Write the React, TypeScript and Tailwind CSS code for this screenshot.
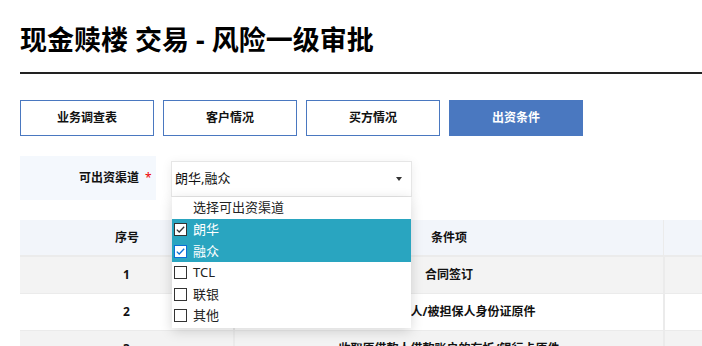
import React from 'react';

const font = { fontFamily: '"Noto Sans", "Noto Sans CJK SC", sans-serif' };

const tabs = [
  { id: 'survey', name: '业务调查表' },
  { id: 'customer', name: '客户情况' },
  { id: 'buyer', name: '买方情况' },
  { id: 'funding', name: '出资条件' },
];

const options = [
  { id: 'lh', name: '朗华', checked: true, focus: false },
  { id: 'rz', name: '融众', checked: true, focus: true },
  { id: 'tcl', name: 'TCL', checked: false, focus: false },
  { id: 'ly', name: '联银', checked: false, focus: false },
  { id: 'qt', name: '其他', checked: false, focus: false },
];

const rows = [
  { no: '1', item: '合同签订', bg: 'bg-[#f3f3f3]' },
  { no: '2', item: '收取借款人/被担保人身份证原件', bg: 'bg-white' },
  { no: '3', item: '收取原借款人借款账户的存折/银行卡原件', bg: 'bg-[#f3f3f3]' },
];

const Checkbox: React.FC<{ checked: boolean; focus: boolean }> = ({ checked, focus }) => (
  <svg width="13" height="13" viewBox="0 0 13 13" className="shrink-0">
    <rect x="0.5" y="0.5" width="12" height="12" fill="#fff" stroke={focus ? '#0a6fd6' : '#333'} />
    {checked && (
      <path d="M2.8 6.6 L5.2 9 L10.2 3.8" fill="none" stroke={focus ? '#0a6fd6' : '#333'} strokeWidth="1.3" />
    )}
  </svg>
);

export default function App() {
  const activeTab = 'funding';

  return (
    <div className="w-[702px] h-[346px] overflow-hidden bg-white" style={font}>
      <div className="pl-[20px] pt-[22px] w-[900px]">
        <h1 className="text-[27px] leading-[36px] font-bold text-black">现金赎楼 交易 - 风险一级审批</h1>
        <div className="mt-[14px] h-[2px] bg-[#222]" />

        <div className="mt-[26px] flex gap-[9px]">
          {tabs.map(tab => (
            <div
              key={tab.id}
              className={
                activeTab === tab.id
                  ? 'w-[134px] h-[36px] flex items-center justify-center bg-[#4a78c0] border border-[#4a78c0] text-white text-[12px] font-bold'
                  : 'w-[134px] h-[36px] flex items-center justify-center bg-white border border-[#4a78c0] text-[#111] text-[12px] font-bold'
              }
            >
              {tab.name}
            </div>
          ))}
        </div>

        <div className="mt-[20px] flex items-start">
          <div className="w-[136px] h-[44px] bg-[#f4f8fd] flex items-center justify-end pr-[3px] text-[12px] font-bold text-[#111]">
            可出资渠道
            <span className="ml-[6px] w-[8px] text-[#e00] font-normal">*</span>
          </div>
          <div className="relative ml-[15px] mt-[5px] z-10">
            <div className="w-[241px] h-[36px] border border-[#e6e6e6] bg-white shadow-[0_2px_10px_rgba(0,0,0,0.08)] flex items-center justify-between pl-[3px] pr-[9px]">
              <span className="text-[13px] text-[#111]">朗华,融众</span>
              <svg width="6" height="4" viewBox="0 0 6 4">
                <path d="M0 0 H6 L3 4 Z" fill="#333" />
              </svg>
            </div>
            <div className="absolute left-[1px] top-[36px] w-[239px] bg-white shadow-[0_3px_12px_rgba(0,0,0,0.16)] pb-[1px]">
              <div className="h-[22px] flex items-center pl-[21px] text-[13px] text-[#222]">选择可出资渠道</div>
              {options.map(opt => (
                <div
                  key={opt.id}
                  className={
                    opt.checked
                      ? 'h-[21.5px] flex items-center gap-[6px] pl-[2px] bg-[#29a5c0] text-white text-[13px]'
                      : 'h-[21.5px] flex items-center gap-[6px] pl-[2px] bg-white text-[#222] text-[13px]'
                  }
                >
                  <Checkbox checked={opt.checked} focus={opt.focus} />
                  <span>{opt.name}</span>
                </div>
              ))}
            </div>
          </div>
        </div>

        <div className="mt-[20px] text-[12px] font-bold text-[#111]">
          <div className="flex h-[37px] bg-[#f2f5fa] border-b-2 border-[#ebebeb]">
            <div className="w-[214px] flex items-center justify-center">序号</div>
            <div className="w-[429px] flex items-center justify-center border-l border-[#ebebeb]">条件项</div>
            <div className="flex-1 border-l border-[#ebebeb]" />
          </div>
          {rows.map(row => (
            <div key={row.no} className={`flex h-[37px] border-b border-[#ebebeb] ${row.bg}`}>
              <div className="w-[213px] flex items-center justify-center">{row.no}</div>
              <div className="w-[430px] flex items-center justify-center border-l-2 border-[#ebebeb]">{row.item}</div>
              <div className="flex-1 border-l-2 border-[#ebebeb]" />
            </div>
          ))}
        </div>
      </div>
    </div>
  );
}
